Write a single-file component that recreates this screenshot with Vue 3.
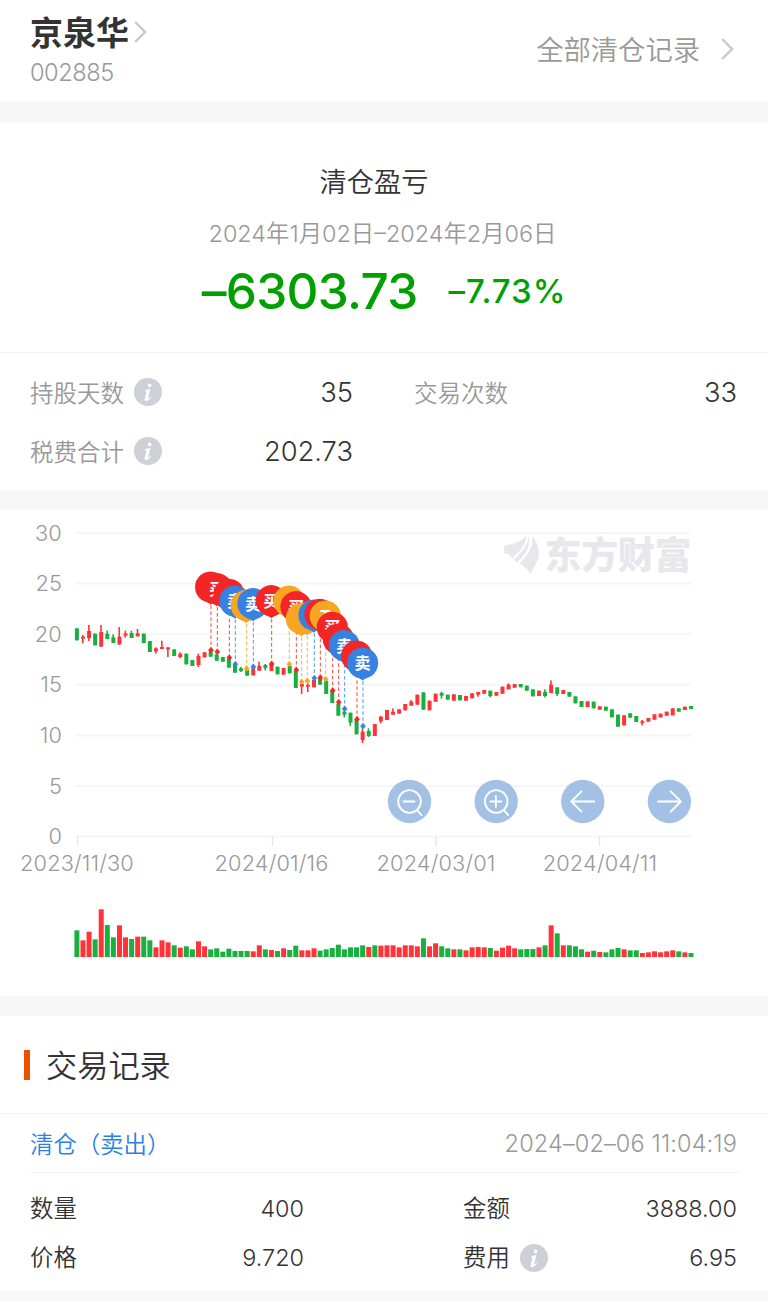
<script setup>
const RED = '#ff3338'
const GREEN = '#18b03e'
const PITCH = 6.08
const cx = (i) => 76.9 + i * PITCH

// Volume bars: [height in thirds of a pixel, up/down]
const volume = `80G 50R 76R 53G 143R 96G 59G 95R 59R 54G 61R 61G 50G 29R 50R 44R 35G 28R 32G 23G 47R 32R 23G 26G 16G 25G 18G 18G 18G 17R
35R 23G 21R 18G 26R 21G 34G 20R 20R 26R 19G 23G 27G 37G 23G 29G 29G 35G 30R 35G 34R 35R 35R 29R 35R 35R 32R 56G 32R 41R 32G 26G 23R 23G
20R 29R 30R 29R 27G 19R 28R 34R 26R 23G 24G 24G 29R 35G 95R 71G 35R 35G 32G 23G 16R 19G 15R 14G 23G 27G 23R 20G 20G 12R 14R 17R 14R 17R
20R 17G 14R 12G`
  .split(/\s+/)
  .map((s, i) => ({ x: cx(i) - 2.5, h: parseInt(s) / 3, fill: s.endsWith('R') ? RED : GREEN }))

// Candles: colour, body top, body bottom, optional high and low
const rows = `G205,241 R230,236,225,250 R213,234,195,243 G221,256 R216,260,195,260 G221,237,212,237 G232,249,223,249 R230,253,201,255
R220,227,212,233 G219,234,212,234 R220,229,207,229 G221,249 G243,276 R265,274,262,281 R261,267,242,267 R262,268,262,291 G268,288
R281,291,277,295 G281,313 G300,318 R288,315,281,321 R277,292 G275,290 G283,302 G291,305 G297,323 G315,338 G325,333,321,336 G330,347
R325,346 R318,332,305,332 G315,324,312,331 R312,333 G320,343 R324,344 G318,340 G333,384 R372,380,372,402 R375,380,370,396 R360,382
G354,374 G362,402 G392,429 G432,467 G455,464,452,472 G458,488,458,498 G480,523 R515,540,505,549 G513,528,505,531 R492,528 R470,484,468,490
R450,480 R455,464,445,464 R448,461 R432,451 R425,437,420,437 R404,434 G397,449 R422,451 R401,425 G399,407,395,416 G404,419 R403,422
G405,421 R408,422 R400,415 R396,404,396,410 R390,401 G392,408,392,412 R396,407 R380,401 R374,388,370,388 R372,383 G372,382 G377,392
G388,409 R392,408 G396,408,388,412 R374,399,361,399 G382,402,382,408 R390,402 G396,410 G409,430 G423,441 R424,441 G425,445 R439,449
G440,452 G448,472 G464,500 R466,496 G460,473 G468,486 R484,489,480,496 R474,485 R463,479 R461,472 R455,467 R445,466 G445,455 R440,450
G438,447`
  .split(/\s+/)
  .map((s, i) => {
    const [top, bottom, high = top, low = bottom] = s.slice(1).split(',').map((n) => 50 + n / 3)
    return { x: cx(i), top, bottom, high, low, fill: s[0] === 'R' ? RED : GREEN }
  })

const kinds = {
  B: { fill: '#f32525', text: '买' },
  S: { fill: '#3782e1', text: '卖' },
  T: { fill: '#f6a623', text: 'T' }
}
// A trailing "-" marks a pin whose letter is covered by its neighbours
const pins = `B63,271- B82,276 B118,293- S136,313 T170,326- S190,321 B245,312 T298,313- B319,330 T335,366- T352,363- S373,355- B391,353-
T407,358 B428,392 B446,427- S464,447 B501,478- S519,499`
  .split(/\s+/)
  .map((s) => {
    const [x, y] = s.slice(1).replace('-', '').split(',').map(Number)
    return { ...kinds[s[0]], x: 190 + x / 3, y: 50 + y / 3, covered: s.endsWith('-') }
  })

const grid = [30, 25, 20, 15, 10, 5, 0].map((v, i) => ({ v, y: 23 + i * 50.6 }))
const dates = [
  { t: '2023/11/30', x: 77, tick: 77.5 },
  { t: '2024/01/16', x: 271.5, tick: 272.5 },
  { t: '2024/03/01', x: 436, tick: 436 },
  { t: '2024/04/11', x: 600, tick: 599.5 }
]
const tools = [
  { x: 409.5, d: 'M-6 0H5M7.6 8.6L12 13.6', lens: true },
  { x: 496.2, d: 'M-5.8 0H5.2M-.3 -5.5V5.5M7.6 8.6L12 13.6', lens: true },
  { x: 582.8, d: 'M11.5 0H-11.5M-1.3 -10.2L-11.5 0L-1.3 10.2' },
  { x: 669.4, d: 'M-11.5 0H11.5M1.3 -10.2L11.5 0L1.3 10.2' }
]
const infoPath = 'M11 12.4C12.8 11.8 14.3 11.3 16.4 11L14.1 19.8C13.8 21 14.6 20.6 16.4 18.7L17 19.3C15.1 22.2 13.5 23.1 12 23.1C10.6 23.1 10.4 22 10.8 20.5L12.4 14.4C12.7 13.3 12.2 13.1 10.9 13.2Z'
</script>

<template>
  <main class="page">
    <header class="head">
      <div>
        <h1 class="name">
          <span>京泉华</span>
          <svg width="13" height="22" viewBox="0 0 13 22"><path d="M1.2 1L11 11L1.2 21" /></svg>
        </h1>
        <div class="code">002885</div>
      </div>
      <div class="all">
        <span class="up">全部清仓记录</span>
        <svg width="13" height="22" viewBox="0 0 13 22"><path d="M1.2 1L11 11L1.2 21" /></svg>
      </div>
    </header>

    <section class="profit">
      <h2>清仓盈亏</h2>
      <div class="period">2024年1月02日–2024年2月06日</div>
      <div class="result"><b class="amount">–6303.73</b><b class="rate">–7.73%</b></div>
    </section>

    <section class="stats">
      <div class="stat">
        <span>持股天数</span><i class="info"><svg viewBox="0 0 28 28"><circle cx="15.6" cy="7.4" r="1.8" /><path :d="infoPath" /></svg></i>
        <em>35</em>
      </div>
      <div class="stat"><span>交易次数</span><em>33</em></div>
      <div class="stat">
        <span>税费合计</span><i class="info"><svg viewBox="0 0 28 28"><circle cx="15.6" cy="7.4" r="1.8" /><path :d="infoPath" /></svg></i>
        <em>202.73</em>
      </div>
    </section>

    <section class="chart">
      <svg width="768" height="486" viewBox="0 0 768 486">
        <g class="grid">
          <path v-for="g in grid" :key="g.v" :d="`M76 ${g.y}H691`" />
          <path v-for="d in dates" :key="d.t" :d="`M${d.tick} 326V336`" class="tick" />
        </g>
        <g class="axis">
          <text v-for="g in grid" :key="g.v" x="62" :y="g.y + 7.5" text-anchor="end">{{ g.v }}</text>
          <text v-for="d in dates" :key="d.t" :x="d.x" y="361" text-anchor="middle">{{ d.t }}</text>
        </g>
        <g class="brand">
          <path d="M504 36C510 34 520 33 526.5 26C526 36 518 42 512 48.5C510 44 508 43 504.5 44.2Z" />
          <path d="M528.5 26C531 36 526 44 517 52.5C515.5 51 514.5 50.3 513.5 49.5C522 42 528 36 528.5 26Z" />
          <path d="M532 26C539 33 541 45 536.5 53C534 57 532 60 530.8 64.3C528 60 525 56 519.5 53.5C529 44 534 36 532 26Z" />
          <text x="544.5" y="59" textLength="147">东方财富</text>
        </g>
        <g>
          <template v-for="(c, i) in rows" :key="i">
            <rect :x="c.x - 2" :y="c.top" width="4" :height="c.bottom - c.top" :fill="c.fill" />
            <rect :x="c.x - 1" :y="c.high" width="1.6" :height="c.low - c.high" :fill="c.fill" />
          </template>
        </g>
        <g v-for="(p, i) in pins" :key="'l' + i" :stroke="p.fill" :fill="p.fill">
          <path :d="`M${p.x} ${p.y - 45}V${p.y}`" stroke-width="1" stroke-opacity=".85" stroke-dasharray="3.6 2.4" />
          <path :d="`M${p.x} ${p.y - 3.2}L${p.x + 2.6} ${p.y}L${p.x} ${p.y + 2.6}L${p.x - 2.6} ${p.y}Z`" stroke-width=".5" />
        </g>
        <g v-for="(p, i) in pins" :key="'p' + i" :transform="`translate(${p.x - .4} ${p.y - 63.3})`">
          <path d="M0 17.6C-1.6 16.2 -3.5 15.3 -6.2 14.3A15.6 15.6 0 1 1 6.2 14.3C3.5 15.3 1.6 16.2 0 17.6Z" :fill="p.fill" />
          <text v-if="!p.covered" class="pin" y="6" text-anchor="middle">{{ p.text }}</text>
        </g>
        <g v-for="t in tools" :key="t.x" :transform="`translate(${t.x} 291.5)`">
          <circle r="21.7" class="disc" />
          <circle v-if="t.lens" r="11.3" class="line" />
          <path :d="t.d" class="line" />
        </g>
        <rect v-for="(v, i) in volume" :key="'v' + i" :x="v.x" :y="447 - v.h" width="5" :height="v.h" :fill="v.fill" />
      </svg>
    </section>

    <section class="records">
      <h3><span class="up">交易记录</span></h3>
      <article>
        <div class="title"><span class="state">清仓（卖出）</span><time>2024–02–06 11:04:19</time></div>
        <div class="details">
          <div class="item"><span class="up">数量</span><em>400</em></div>
          <div class="item"><span class="up">金额</span><em>3888.00</em></div>
          <div class="item"><span class="up">价格</span><em>9.720</em></div>
          <div class="item">
            <span class="up">费用</span><i class="info"><svg viewBox="0 0 28 28"><circle cx="15.6" cy="7.4" r="1.8" /><path :d="infoPath" /></svg></i>
            <em>6.95</em>
          </div>
        </div>
      </article>
    </section>
  </main>
</template>

<style>
body { background: #fff; }
</style>

<style scoped>
.page { width: 768px; height: 1311px; overflow: hidden; background: #fff; color: #333; font-family: Inter, "Noto Sans CJK SC", sans-serif; font-weight: 350; }
h1, h2, h3 { margin: 0; font-weight: 350; }
em { font-style: normal; }
.up { padding-bottom: 3px; }
.head { box-sizing: border-box; height: 122px; border-bottom: 20px solid #f7f7f7; padding: 10px 34px 0 30px; display: flex; justify-content: space-between; }
.head svg { fill: none; stroke: #c8c8c8; stroke-width: 2.4; }
.name { display: flex; align-items: center; height: 44px; font-size: 33px; font-weight: 700; gap: 5px; line-height: 44px; }
.name span { padding-top: 2px; }
.code { font-size: 23.6px; font-weight: 300; letter-spacing: -.45px; line-height: 28px; margin-top: 5px; color: #999; }
.all { display: flex; align-items: center; height: 78px; gap: 21px; font-size: 27.3px; color: #999; }
.profit { box-sizing: border-box; height: 231px; border-bottom: 1px solid #f3f3f3; padding-top: 41px; text-align: center; }
h2 { font-size: 27.3px; line-height: 40px; padding-right: 20px; }
.period { font-size: 23.4px; line-height: 34px; margin-top: 14px; color: #999; padding-right: 3px; white-space: nowrap; }
.result { display: flex; justify-content: center; align-items: center; gap: 31px; height: 60px; margin-top: 10px; color: #00a000; white-space: nowrap; }
.amount { font-size: 49.5px; font-weight: 500; line-height: 60px; letter-spacing: -.7px; }
.rate { font-size: 33px; font-weight: 500; line-height: 60px; letter-spacing: .9px; }
.stats { box-sizing: border-box; height: 157px; border-bottom: 20px solid #f7f7f7; padding: 9px 31px 0 30px; display: grid; grid-template-columns: 323px 323px; grid-auto-rows: 59px; column-gap: 61px; }
.stat { display: flex; align-items: center; color: #999; font-size: 23.5px; }
.stat em, .item em { margin-left: auto; color: #333; }
.stat em { font-size: 27.3px; padding-top: 2px; }
.info { width: 28px; height: 28px; border-radius: 50%; background: #cdd1d7; margin-left: 10px; }
.info svg { display: block; fill: #fff; }
.chart { height: 486px; border-bottom: 20px solid #f7f7f7; }
.chart > svg { display: block; }
.grid { stroke: #f6f6f6; stroke-width: 2; }
.tick { stroke: #e8e8e8; stroke-width: 1.4; }
.axis { fill: #999; font-size: 21.8px; letter-spacing: .15px; }
.brand { fill: #e7e7ec; font-family: "Noto Sans CJK SC", sans-serif; font-size: 37px; font-weight: 900; }
.pin { fill: #fff; font-size: 16px; font-weight: 700; }
.disc { fill: #a3c1e4; }
.line { fill: none; stroke: #fff; stroke-width: 1.8; stroke-linecap: round; stroke-linejoin: round; }
.records { height: 295px; }
h3 { display: flex; align-items: center; box-sizing: border-box; height: 98px; padding-left: 24px; border-bottom: 1px solid #f3f3f3; font-size: 31.2px; }
h3::before { content: ""; width: 6px; height: 30px; margin-right: 16px; background: #eb5200; }
article { height: 177px; border-bottom: 10px solid #f7f7f7; }
.title { display: flex; justify-content: space-between; align-items: center; box-sizing: border-box; height: 59px; margin: 0 28px 0 30px; padding-right: 3px; border-bottom: 1px solid #f3f3f3; color: #2c80e4; font-size: 23.4px; }
.state { padding-bottom: 1px; }
time { color: #999; font-size: 23.5px; letter-spacing: .13px; }
.details { display: grid; grid-template-columns: 274px 274px; grid-auto-rows: 49px; justify-content: space-between; padding: 11px 31px 0 30px; }
.item { display: flex; align-items: center; font-size: 23.4px; }
</style>
